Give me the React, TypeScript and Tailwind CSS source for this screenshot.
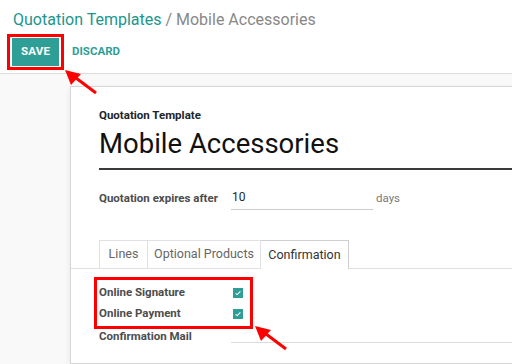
import React from 'react';

const teal = 'bg-[#2f9e96]';

function Arrow({ className }: { className: string }) {
  return (
    <svg className={className} viewBox="0 0 34 26" width="34" height="26">
      <line x1="32" y1="24" x2="8" y2="6" stroke="#ff0000" strokeWidth="3" />
      <polygon points="1,1 17,5 7,16" fill="#ff0000" />
    </svg>
  );
}

function Check() {
  return (
    <span className={`flex items-center justify-center w-[10px] h-[10px] ${teal}`}>
      <svg viewBox="0 0 10 10" width="8" height="8">
        <path d="M2 5.5 L4 7 L8 3" stroke="#fff" strokeWidth="1.4" fill="none" />
      </svg>
    </span>
  );
}

export default function App() {
  return (
    <div
      className="relative w-[512px] h-[364px] overflow-hidden bg-white flex flex-col"
      style={{ fontFamily: 'Roboto, "Noto Sans", sans-serif' }}
    >
      {/* control panel */}
      <div className="flex flex-col border-b border-[#dcdcdc] h-[74px]">
        <div className="pl-[13px] pt-[10px] text-[16px] leading-[20px]">
          <span className="text-[#21958c]">Quotation Templates</span>
          <span className="text-[#888888]"> / Mobile Accessories</span>
        </div>
        <div className="flex items-center pl-[7px] mt-[4px]">
          <div className="border-[3px] border-[#ff0000] px-[2px] py-[1px]">
            <button
              className={`w-[47px] h-[28px] ${teal} text-white text-[11.5px] font-bold tracking-[0.2px]`}
            >
              SAVE
            </button>
          </div>
          <button className="ml-[8px] text-[#2f9e96] text-[11.5px] font-bold">DISCARD</button>
        </div>
      </div>

      {/* main */}
      <div className="flex-1 bg-[#f9f9f9] pl-[70px] pt-[12px]">
        <div className="bg-white border border-[#d6d6d6] border-r-0 h-full shadow-[0_2px_6px_rgba(0,0,0,0.08)] flex flex-col">
          <div className="pl-[28px] pt-[21px]">
            <div className="text-[11.5px] font-bold text-[#212529] leading-[14px]">Quotation Template</div>
            <div className="mt-[5px] text-[27.5px] text-[#111] leading-[34px] border-b-2 border-[#3a3a3a] pb-[7px]">
              Mobile Accessories
            </div>
            <div className="flex items-center mt-[18px] text-[11.5px]">
              <span className="w-[132px] font-bold text-[#4c4c4c]">Quotation expires after</span>
              <span className="w-[142px] border-b border-[#cccccc] pl-[1px] pb-[3px] text-[#212529] text-[12px]">10</span>
              <span className="ml-[3px] text-[#777]">days</span>
            </div>
          </div>

          {/* tabs */}
          <div className="mt-[30px] flex pl-[28px] border-b border-[#dee2e6] h-[29px] text-[12.5px]">
            <div className="w-[49px] flex items-center justify-center border border-b-0 border-[#dee2e6] text-[#666]">Lines</div>
            <div className="w-[113px] flex items-center justify-center border border-l-0 border-b-0 border-[#dee2e6] text-[#666]">
              Optional Products
            </div>
            <div className="w-[88px] flex items-center justify-center border border-l-0 border-b-0 border-[#cfcfcf] bg-white text-[#333] -mb-px">
              Confirmation
            </div>
          </div>

          <div className="pl-[23px] pt-[8px] text-[11.5px] font-bold text-[#4c4c4c]">
            <div className="w-[159px] h-[52px] border-[3px] border-[#ff0000] flex flex-col justify-center gap-[8px] pl-[2px]">
              <div className="flex items-center h-[13px]">
                <span className="w-[134px]">Online Signature</span>
                <Check />
              </div>
              <div className="flex items-center h-[13px]">
                <span className="w-[134px]">Online Payment</span>
                <Check />
              </div>
            </div>
            <div className="flex items-end pl-[5px]">
              <span className="w-[132px] leading-[14px]">Confirmation Mail</span>
              <span className="flex-1 border-b border-[#dcdcdc] h-[12px]"></span>
            </div>
          </div>
        </div>
      </div>

      <Arrow className="absolute left-[64px] top-[69px]" />
      <Arrow className="absolute left-[254px] top-[325px]" />
    </div>
  );
}
